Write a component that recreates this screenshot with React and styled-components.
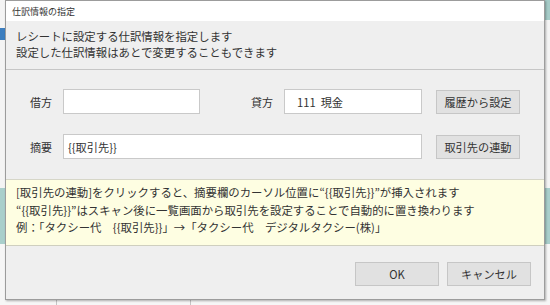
import styled, { createGlobalStyle } from 'styled-components'

const GlobalStyle = createGlobalStyle`
  body {
    margin: 0;
    font-family: "Noto Sans CJK JP", "Noto Sans", sans-serif;
    color: #333;
  }
`

const Backdrop = styled.div`
  width: 550px;
  height: 305px;
  overflow: hidden;
  padding-left: 5px;
  box-sizing: border-box;
  background:
    linear-gradient(#3d7ebf, #3d7ebf) 0 28px / 5px 12px no-repeat,
    linear-gradient(#a6ccc8, #a6ccc8) 545px 0 / 5px 20px no-repeat,
    linear-gradient(#c5c5c5, #c5c5c5) 56px 300px / 1px 5px no-repeat,
    linear-gradient(#c5c5c5, #c5c5c5) 190px 300px / 1px 5px no-repeat,
    linear-gradient(to bottom, #f4f4f4 0, #f4f4f4 188px, #a9cfcb 188px, #a9cfcb 244px, #f6f6f6 244px);
`

const Dialog = styled.div`
  width: 540px;
  height: 300px;
  box-sizing: border-box;
  border: 1px solid #9c9c9c;
  background: #efefef;
  box-shadow: 1px 1px 2px rgba(0, 0, 0, 0.3);
  display: flex;
  flex-direction: column;
`

const TitleBar = styled.div`
  height: 20px;
  background: #fff;
  display: flex;
  align-items: center;
  padding-left: 6px;
  font-size: 9px;
  color: #333;
`

const Header = styled.div`
  height: 49px;
  padding: 7px 10px 0;
  box-sizing: border-box;
  border-bottom: 1px solid #c6c6c6;
  font-size: 11.4px;
  line-height: 16px;
`

const Fields = styled.div`
  height: 109px;
  box-sizing: border-box;
  padding: 19px 0 0 24px;
  display: grid;
  grid-template-columns: 33px 137px 51px 33px 138px 14px 84px;
  grid-template-rows: 25px 25px;
  row-gap: 20px;
  align-items: center;
`

const Label = styled.div`
  font-size: 11px;
  grid-column: ${(p) => p.$col};
`

const Input = styled.div`
  grid-column: ${(p) => p.$col};
  height: 25px;
  box-sizing: border-box;
  background: #fff;
  border: 1px solid #c9c9c9;
  display: flex;
  align-items: center;
  padding-left: ${(p) => p.$indent || 4}px;
  font-size: 11.2px;
  white-space: pre;
`

const Button = styled.div`
  width: 84px;
  height: 24px;
  box-sizing: border-box;
  background: #e1e1e1;
  border: 1px solid #c6c6c6;
  display: flex;
  align-items: center;
  justify-content: center;
  font-size: 11.2px;
  color: #333;
  grid-column: 7;
`

const Note = styled.div`
  height: 67px;
  box-sizing: border-box;
  background: #fefee2;
  border-top: 1px solid #d6d6c8;
  border-bottom: 1px solid #cfcfbf;
  padding: 4px 10px 0;
  font-size: 11.4px;
  line-height: 17.5px;
  white-space: nowrap;
`

const Footer = styled.div`
  flex: 1;
  display: flex;
  justify-content: flex-end;
  align-items: flex-start;
  gap: 8px;
  padding: 16px 13px 0 0;
`

const App = () => {
  return <>
    <GlobalStyle />
    <Backdrop>
      <Dialog>
        <TitleBar>仕訳情報の指定</TitleBar>
        <Header>
          <div>レシートに設定する仕訳情報を指定します</div>
          <div>設定した仕訳情報はあとで変更することもできます</div>
        </Header>
        <Fields>
          <Label $col={1}>借方</Label>
          <Input $col={2} />
          <Label $col={4}>貸方</Label>
          <Input $col={5} $indent={12}>111  現金</Input>
          <Button>履歴から設定</Button>
          <Label $col={1}>摘要</Label>
          <Input $col="2 / 6">{'{{取引先}}'}</Input>
          <Button>取引先の連動</Button>
        </Fields>
        <Note>
          <div>[取引先の連動]をクリックすると、摘要欄のカーソル位置に“{'{{取引先}}'}”が挿入されます</div>
          <div>“{'{{取引先}}'}”はスキャン後に一覧画面から取引先を設定することで自動的に置き換わります</div>
          <div>例：「タクシー代　{'{{取引先}}'}」→「タクシー代　デジタルタクシー(株)」</div>
        </Note>
        <Footer>
          <Button>OK</Button>
          <Button>キャンセル</Button>
        </Footer>
      </Dialog>
    </Backdrop>
  </>
}

export default App
